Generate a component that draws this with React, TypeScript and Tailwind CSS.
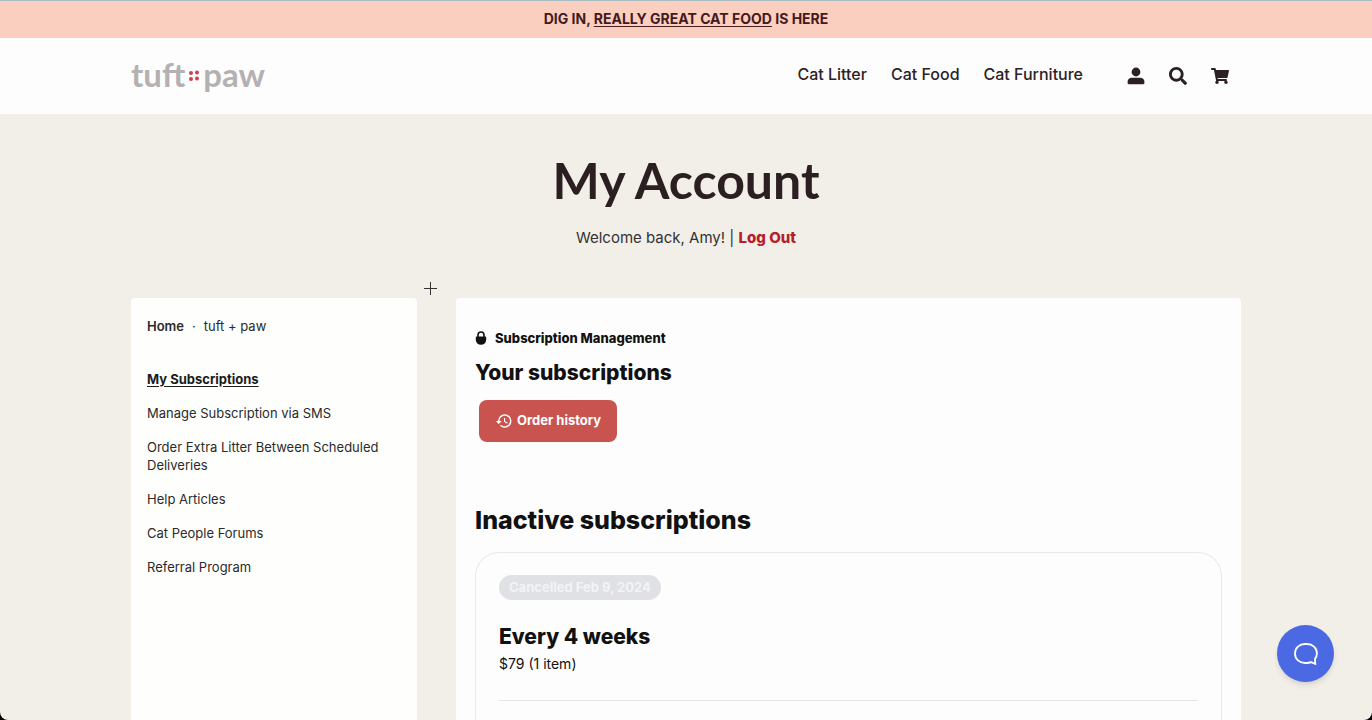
import { FaSearch, FaShoppingCart } from "react-icons/fa";
import { MdHistory } from "react-icons/md";

const NAV_LINKS = ["Cat Litter", "Cat Food", "Cat Furniture"];

const ACCOUNT_LINKS = [
    "Manage Subscription via SMS",
    "Order Extra Litter Between Scheduled Deliveries",
    "Help Articles",
    "Cat People Forums",
    "Referral Program",
];

const LogoDots = () => (
    <svg className="mt-1" width="12" height="12" viewBox="0 0 12 12" fill="#c9444f" aria-hidden="true">
        <circle cx="3" cy="3" r="2" />
        <circle cx="9" cy="2.4" r="2" />
        <circle cx="3" cy="9" r="2" />
        <circle cx="9" cy="8.4" r="2" />
    </svg>
);

const UserIcon = () => (
    <svg width="18" height="18" viewBox="0 0 18 18" fill="currentColor" aria-hidden="true">
        <circle cx="9" cy="5" r="4.4" />
        <path d="M5 10.800h8c2.500 0 4.400 1.600 4.400 4v1.300c0 .7-.5 1.200-1.200 1.200H1.800c-.7 0-1.200-.5-1.200-1.200v-1.300c0-2.400 1.900-4 4.400-4z" />
    </svg>
);

const LockIcon = () => (
    <svg width="12" height="14" viewBox="0 0 12 14" aria-hidden="true">
        <path d="M3 6.5V4a3 3 0 0 1 6 0v2.5" fill="none" stroke="#111" strokeWidth="1.6" />
        <path d="M1.8 5.6h8.4c.6 0 1 .4 1 1V9a5.2 4.8 0 0 1-10.4 0V6.6c0-.6.4-1 1-1z" fill="#111" />
    </svg>
);

const ChatIcon = () => (
    <svg width="24" height="24" viewBox="0 0 24 24" fill="none" stroke="#fff" strokeWidth="1.8" aria-hidden="true">
        <path
            d="M13 2h-2C5.500 2 1 5.800 1 11.500S5.500 21 11 21h2c1.500 0 2.700-.3 3.800-.9l4.500 1.700-.3-5c1.200-1.400 1.900-3.200 1.900-5.300C22.900 5.800 18.500 2 13 2z"
            strokeLinejoin="miter"
        />
    </svg>
);

const Header = () => (
    <header className="bg-[#fefdfd]">
        <div className="mx-auto flex h-[76px] max-w-[1110px] items-center justify-between">
            <a
                href="#"
                aria-label="tuft + paw"
                className="flex items-center gap-[3px] pb-1 font-['Lato'] text-[33px] leading-8 font-bold text-[#b3b1b1]"
            >
                <span>tuft</span>
                <LogoDots />
                <span>paw</span>
            </a>
            <div className="flex items-center pr-3">
                <nav className="flex gap-6 pb-1 text-[16px] font-medium text-[#2c2225]">
                    {NAV_LINKS.map((label) => (
                        <a key={label} href="#">
                            {label}
                        </a>
                    ))}
                </nav>
                <div className="ml-11 flex gap-6 text-[18px] text-[#2b2023]">
                    <a href="#" aria-label="Account">
                        <UserIcon />
                    </a>
                    <a href="#" aria-label="Search">
                        <FaSearch />
                    </a>
                    <a href="#" aria-label="Cart">
                        <FaShoppingCart />
                    </a>
                </div>
            </div>
        </div>
    </header>
);

const Sidebar = () => (
    <aside className="w-[286px] shrink-0 rounded-t bg-[#fefefc] px-4 pt-5 text-[13px] text-[#2b2b2b]">
        <p className="leading-4">
            <a href="#" className="font-semibold">
                Home
            </a>
            <span className="mx-2">·</span>
            tuft + paw
        </p>
        <ul className="mt-9 space-y-4 leading-[18px]">
            <li>
                <a href="#" className="font-bold text-[#1c1c1c] underline underline-offset-2">
                    My Subscriptions
                </a>
            </li>
            {ACCOUNT_LINKS.map((label) => (
                <li key={label}>
                    <a href="#">{label}</a>
                </li>
            ))}
        </ul>
    </aside>
);

const Subscriptions = () => (
    <main className="flex flex-1 flex-col rounded-t bg-[#fefdfd] px-[19px] pt-8 text-[#111]">
        <p className="flex items-center gap-2 text-[13px] leading-4 font-extrabold">
            <LockIcon />
            Subscription Management
        </p>
        <h2 className="mt-3 text-[21px] leading-[30px] font-extrabold">Your subscriptions</h2>
        <button
            type="button"
            className="mt-3 ml-1 flex h-[42px] items-center gap-1 self-start rounded-lg bg-[#c9534f] px-4 text-[13px] font-bold text-white"
        >
            <MdHistory className="text-[18px]" />
            Order history
        </button>
        <h2 className="mt-15 text-[25px] leading-9 font-extrabold">Inactive subscriptions</h2>
        <section className="mt-[14px] flex-1 rounded-t-3xl border border-b-0 border-[#e9e9ea] px-[23px] pt-[22px]">
            <div className="flex h-[25px] w-fit items-center rounded-full bg-[#e0e1e4] px-2.5 text-[13px] font-bold text-[#f3f3f5]">
                Cancelled Feb 9, 2024
            </div>
            <h3 className="mt-[22px] text-[21px] leading-[30px] font-extrabold">Every 4 weeks</h3>
            <p className="text-[14px] leading-6">$79 (1 item)</p>
            <hr className="mt-6 border-[#e4e4e4]" />
        </section>
    </main>
);

export default function App() {
    return (
        <div className="bg-black">
            <div className="flex min-h-screen flex-col rounded-b-lg bg-[#f2eee8] font-['Inter',sans-serif]">
                <div className="h-[38px] border-t border-[#a9bcc4] bg-[#facfbf] text-center text-[14px] leading-9 font-bold text-[#441a1c]">
                    DIG IN,{" "}
                    <a href="#" className="underline underline-offset-2">
                        REALLY GREAT CAT FOOD
                    </a>{" "}
                    IS HERE
                </div>
                <Header />
                <div className="pt-[34px] text-center">
                    <h1 className="font-['Lato'] text-[50px] leading-16 font-bold text-[#2c1f21]">My Account</h1>
                    <p className="mt-[14px] text-[15px] leading-6 text-[#333]">
                        Welcome back, Amy! |{" "}
                        <a href="#" className="font-extrabold text-[#b5202a]">
                            Log Out
                        </a>
                    </p>
                </div>
                <div className="relative mx-auto mt-12 flex w-full max-w-[1110px] flex-1 gap-[39px]">
                    <Sidebar />
                    <Subscriptions />
                    {/* crosshair pointer */}
                    <svg
                        className="absolute -top-4 left-[293px]"
                        width="13"
                        height="13"
                        viewBox="0 0 13 13"
                        stroke="#333"
                        aria-hidden="true"
                    >
                        <path d="M6.5 0v13M0 6.5h13" />
                    </svg>
                </div>
                <button
                    type="button"
                    aria-label="Open chat"
                    className="fixed right-[38px] bottom-[38px] flex size-[57px] items-center justify-center rounded-full bg-[#4b69e3] shadow-md"
                >
                    <ChatIcon />
                </button>
            </div>
        </div>
    );
}
